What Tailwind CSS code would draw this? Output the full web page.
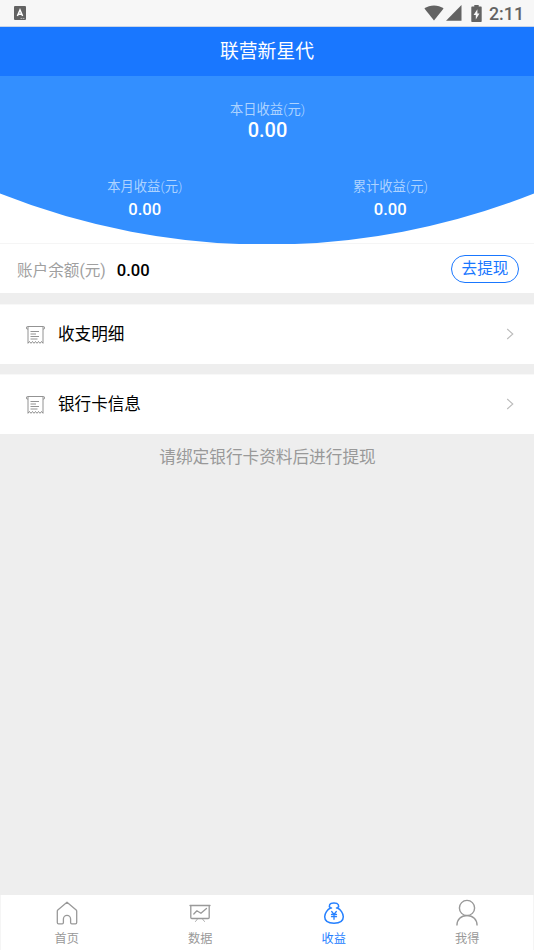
<!DOCTYPE html>
<html lang="zh-CN">
<head>
<meta charset="utf-8">
<meta name="viewport" content="width=device-width, initial-scale=1">
<title>联营新星代</title>
<script src="https://cdn.jsdelivr.net/npm/@tailwindcss/browser@4"></script>
</head>
<body class="flex h-[950px] w-[534px] flex-col overflow-hidden bg-[#eeeeee] font-['Roboto','Noto_Sans_CJK_SC',sans-serif] font-normal">
  <div class="flex h-[27px] shrink-0 items-center justify-between border-b border-[#c9d5e8] bg-[#f7f7f7] pr-[10px] pl-[14px] text-[#636363]">
    <svg class="h-[14px] w-3" viewBox="0 0 12 14"><rect width="12" height="14" rx="1" fill="#636363"/><path d="M3.400 10 6 4l2.600 6M4.300 8.300h3.400" fill="none" stroke="#fff" stroke-width="1.500"/><path d="M6.500 12.400H11" stroke="#ccc" stroke-width=".8" stroke-dasharray="1.5 .6"/></svg>
    <div class="flex items-center">
      <svg class="h-4 w-[20px]" viewBox="0 0 20 16" fill="currentColor"><path d="M.4 3.600C5.800-.7 14.200-.7 19.600 3.600L10 15.600Z"/></svg>
      <svg class="ml-[2px] h-4 w-[16px]" viewBox="0 0 16 16" fill="currentColor"><path d="M15.500 0v15.800H0Z"/></svg>
      <svg class="ml-[9px] h-[17px] w-[11px]" viewBox="0 0 11 17"><path d="M3.300 0h4.400v1.600H10q.7 0 .7.8v13.800q0 .8-.7.8H1q-.7 0-.7-.8V2.400q0-.8.7-.8h2.300Z" fill="currentColor"/><path d="M6.400 4.200 2.600 10h2.200v4.500L8.500 8.600H6.400Z" fill="#f7f7f7"/></svg>
      <span class="ml-[7px] pt-[2px] text-[17.8px] leading-[24px] font-medium">2:11</span>
    </div>
  </div>

  <header class="flex h-[49px] shrink-0 items-center justify-center bg-[#1977ff] text-[18.8px] leading-6 text-white">联营新星代</header>

  <section class="relative h-[168px] shrink-0 bg-white text-white shadow-[inset_0_-1px_0_#f5f5f5]">
    <svg class="absolute inset-0 h-[168px] w-[534px]" viewBox="0 0 534 168"><path d="M0 0H534V117.500A724 724 0 0 1 0 117.500Z" fill="#338fff"/></svg>
    <div class="relative flex flex-col items-center pt-[24px] pl-px">
      <p class="text-[13.3px] leading-5 text-[#add3ff]">本日收益<span class="font-light">(</span>元<span class="font-light">)</span></p>
      <p class="-mt-[2px] text-[20px] leading-6 font-medium">0.00</p>
    </div>
    <div class="relative mt-[35px] grid grid-cols-2 pr-[21px] pl-[22px] text-center">
      <div>
        <p class="text-[13.3px] leading-5 text-[#add3ff]">本月收益<span class="font-light">(</span>元<span class="font-light">)</span></p>
        <p class="mt-px text-[16.6px] leading-6 font-medium">0.00</p>
      </div>
      <div>
        <p class="text-[13.3px] leading-5 text-[#add3ff]">累计收益<span class="font-light">(</span>元<span class="font-light">)</span></p>
        <p class="mt-px text-[16.6px] leading-6 font-medium">0.00</p>
      </div>
    </div>
  </section>

  <section class="flex h-[49px] shrink-0 items-center bg-white pr-[15px] pl-[17px]">
    <span class="pt-[5px] text-[15.6px] leading-6 text-[#a0a0a0]">账户余额(元)</span>
    <span class="ml-[11px] pt-[5px] text-[16.6px] leading-6 font-medium text-black">0.00</span>
    <button class="ml-auto flex h-[28px] w-[68px] items-center justify-center rounded-full border border-[#1977ff] text-[15.6px] leading-6 text-[#1977ff]">去提现</button>
  </section>

  <a class="mt-[11px] flex h-[60px] shrink-0 items-center border-t border-[#f8f8f8] bg-white pr-[20px] pl-[26px] text-[16.6px] leading-6 text-black">
    <svg class="h-5 w-[19px]" viewBox="0 0 19 20" fill="none" stroke="#777" stroke-width=".8"><path d="M1.700 4.200Q.4 4.200.4 2.800.4 1.500 1.700 1.500H17.300Q18.600 1.500 18.600 2.800 18.600 4.200 17.300 4.200M2 2V18.300l1.500-1.800 1.500 1.800 1.500-1.800 1.500 1.800 1.500-1.800 1.500 1.800 1.500-1.800 1.500 1.800 1.500-1.800L17 18.300V2M4.500 6.500h8.500M4.500 9h5.500M4.500 11.500h8.500M4.500 14h7"/></svg>
    <span class="ml-[13px]">收支明细</span>
    <svg class="mb-px ml-auto h-3 w-[8px]" viewBox="0 0 8 12" fill="none" stroke="#bbb" stroke-width="1.100"><path d="M1.200 1 6.800 6 1.200 11"/></svg>
  </a>
  <a class="mt-[10px] flex h-[60px] shrink-0 items-center border-t border-[#f8f8f8] bg-white pr-[20px] pl-[26px] text-[16.6px] leading-6 text-black">
    <svg class="h-5 w-[19px]" viewBox="0 0 19 20" fill="none" stroke="#777" stroke-width=".8"><path d="M1.700 4.200Q.4 4.200.4 2.800.4 1.500 1.700 1.500H17.300Q18.600 1.500 18.600 2.800 18.600 4.200 17.300 4.200M2 2V18.300l1.500-1.800 1.500 1.800 1.500-1.800 1.500 1.800 1.500-1.800 1.500 1.800 1.500-1.800 1.500 1.800 1.500-1.800L17 18.300V2M4.500 6.500h8.500M4.500 9h5.500M4.500 11.500h8.500M4.500 14h7"/></svg>
    <span class="ml-[13px]">银行卡信息</span>
    <svg class="mb-px ml-auto h-3 w-[8px]" viewBox="0 0 8 12" fill="none" stroke="#bbb" stroke-width="1.100"><path d="M1.200 1 6.800 6 1.200 11"/></svg>
  </a>

  <p class="mt-[12px] pl-px text-center text-[16.65px] leading-6 text-[#999]">请绑定银行卡资料后进行提现</p>

  <nav class="mt-auto grid h-[55px] shrink-0 grid-cols-4 bg-white text-[12.2px] leading-4 text-[#999] shadow-[inset_1px_0_0_#f5f5f5,inset_-1px_0_0_#f5f5f5]">
    <a class="flex flex-col items-center pt-[4px]">
      <svg class="h-[28px] w-[28px]" viewBox="0 0 28 28" fill="none" stroke="#999" stroke-width="1.300" stroke-linejoin="round"><path d="M14 3.200 4.800 11q-.5.500-.5 1.200V23.600q0 1.200 1.200 1.200h3.700q1.200 0 1.200-1.200V20a3.600 3.600 0 0 1 7.200 0v3.600q0 1.200 1.200 1.200h3.700q1.200 0 1.200-1.200V12.200q0-.7-.5-1.200Z"/></svg>
      <span class="mt-[4px]">首页</span>
    </a>
    <a class="flex flex-col items-center pt-[4px]">
      <svg class="h-[28px] w-[28px]" viewBox="0 0 28 28" fill="none" stroke="#999" stroke-width="1.300" stroke-linecap="round" stroke-linejoin="round"><path d="M4 6.500h20M4.800 6.500V18.500q0 1 1 1H22.200q1 0 1-1V6.500M7.800 15l3.100-3.200 4 2.500 5.600-4.900"/><path d="m11.500 20-2 2.500m7-2.500 2 2.500" stroke-width=".8"/></svg>
      <span class="mt-[4px]">数据</span>
    </a>
    <a class="flex flex-col items-center pt-[4px] text-[#2580ff]">
      <svg class="h-[28px] w-[28px]" viewBox="0 0 28 28" fill="none" stroke="#2580ff" stroke-width="1.500" stroke-linecap="round" stroke-linejoin="round"><path d="M10.500 9C8.300 7 9.200 4 14 4s5.700 3 3.500 5M10.500 9C7.500 10.400 4.700 14.500 4.700 17.800c0 4.200 3.300 6.400 9.300 6.400s9.300-2.200 9.300-6.400c0-3.300-2.800-7.400-5.800-8.800M10.500 9h1m5 0h1"/><path d="m11.700 12.500 2.300 2.800 2.300-2.800M14 15.500v4.800M11.500 15.500h5M11.500 17.700h5" stroke-width="1.300"/></svg>
      <span class="mt-[4px]">收益</span>
    </a>
    <a class="flex flex-col items-center pt-[4px]">
      <svg class="h-[28px] w-[28px]" viewBox="0 0 28 28" fill="none" stroke="#999" stroke-width="1.400"><circle cx="14" cy="9" r="7.600"/><path d="M3.900 26.500C3.900 20.500 8 16.500 14 16.500s10.100 4 10.100 10"/></svg>
      <span class="mt-[4px]">我得</span>
    </a>
  </nav>
</body>
</html>
